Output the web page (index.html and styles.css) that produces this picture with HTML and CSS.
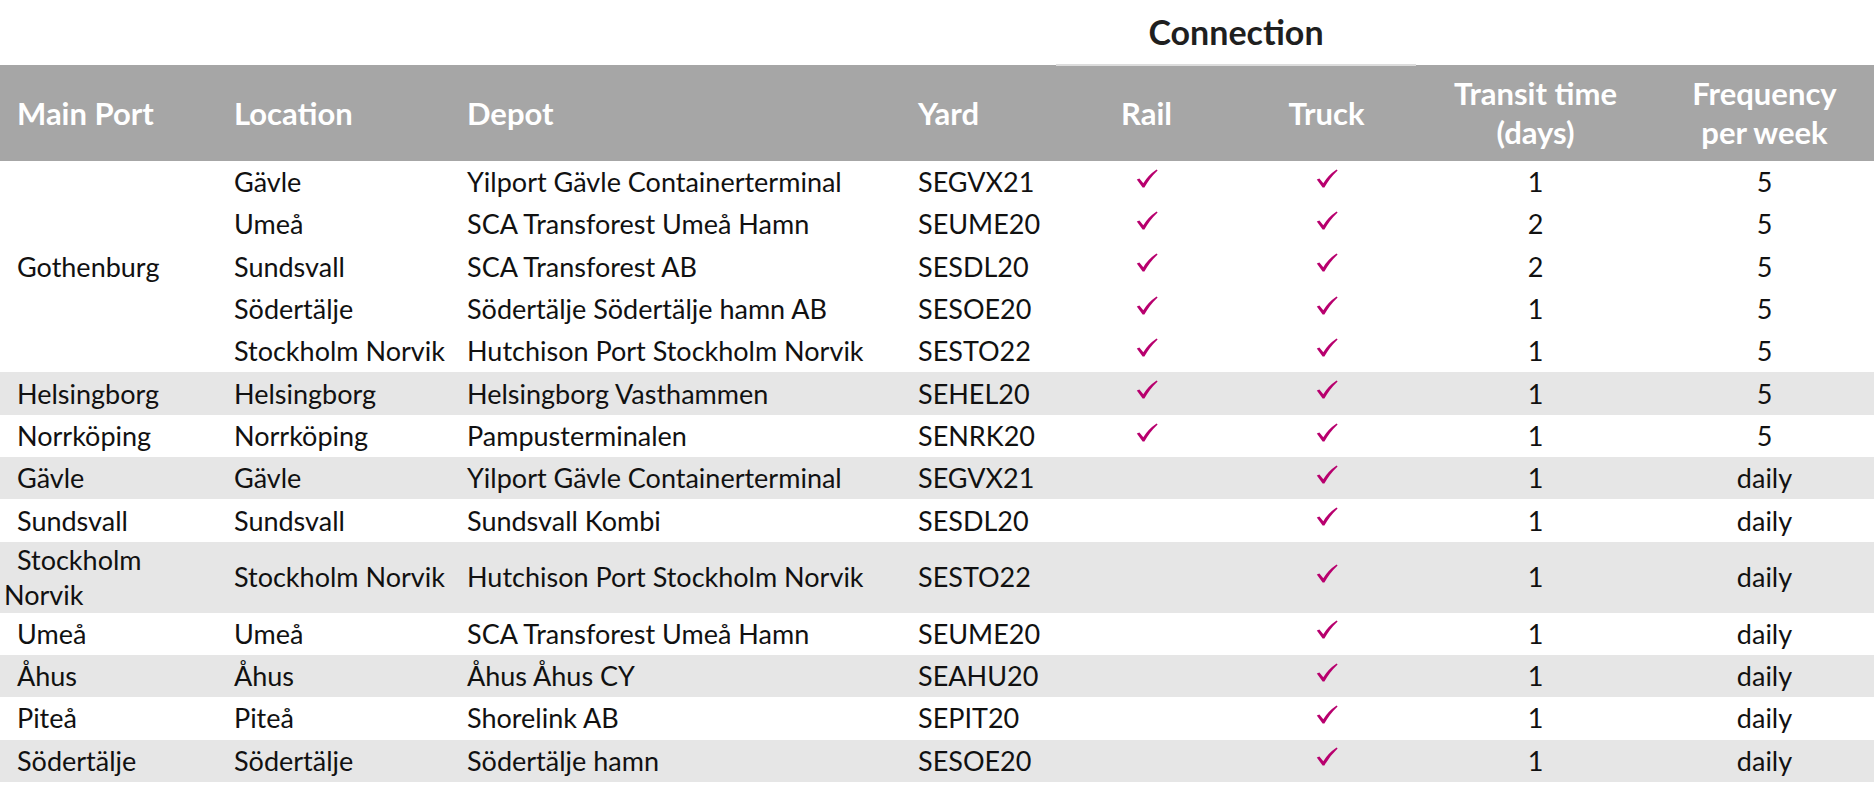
FILE: index.html
```html
<!DOCTYPE html>
<html lang="sv">
<head>
<meta charset="utf-8">
<title>Connections</title>
<link rel="stylesheet" href="styles.css">
</head>
<body>
<table class="grid">
  <colgroup>
    <col class="c-port"><col class="c-loc"><col class="c-depot"><col class="c-yard">
    <col class="c-rail"><col class="c-truck"><col class="c-transit"><col class="c-freq">
  </colgroup>
  <thead>
    <tr class="top">
      <th colspan="4"></th>
      <th colspan="2" class="connection">Connection</th>
      <th colspan="2"></th>
    </tr>
    <tr class="head">
      <th class="port">Main Port</th>
      <th class="txt">Location</th>
      <th class="txt">Depot</th>
      <th class="txt">Yard</th>
      <th class="mid">Rail</th>
      <th class="mid">Truck</th>
      <th class="mid">Transit time<br>(days)</th>
      <th class="mid">Frequency<br>per week</th>
    </tr>
  </thead>
  <tbody>
    <tr>
      <td class="port" rowspan="5">Gothenburg</td>
      <td class="txt">Gävle</td><td class="txt">Yilport Gävle Containerterminal</td><td class="txt">SEGVX21</td>
      <td class="mid"><svg class="chk" viewBox="0 0 22 19"><path d="M0.8 10.6 L3.4 9.4 L7.3 14.2 Q12 6.2 20.6 0.4 L21.6 1.4 Q13.4 9.2 8.4 18.6 L6.6 18.6 Z"/></svg></td>
      <td class="mid"><svg class="chk" viewBox="0 0 22 19"><path d="M0.8 10.6 L3.4 9.4 L7.3 14.2 Q12 6.2 20.6 0.4 L21.6 1.4 Q13.4 9.2 8.4 18.6 L6.6 18.6 Z"/></svg></td>
      <td class="mid">1</td><td class="mid">5</td>
    </tr>
    <tr>
      <td class="txt">Umeå</td><td class="txt">SCA Transforest Umeå Hamn</td><td class="txt">SEUME20</td>
      <td class="mid"><svg class="chk" viewBox="0 0 22 19"><path d="M0.8 10.6 L3.4 9.4 L7.3 14.2 Q12 6.2 20.6 0.4 L21.6 1.4 Q13.4 9.2 8.4 18.6 L6.6 18.6 Z"/></svg></td>
      <td class="mid"><svg class="chk" viewBox="0 0 22 19"><path d="M0.8 10.6 L3.4 9.4 L7.3 14.2 Q12 6.2 20.6 0.4 L21.6 1.4 Q13.4 9.2 8.4 18.6 L6.6 18.6 Z"/></svg></td>
      <td class="mid">2</td><td class="mid">5</td>
    </tr>
    <tr>
      <td class="txt">Sundsvall</td><td class="txt">SCA Transforest AB</td><td class="txt">SESDL20</td>
      <td class="mid"><svg class="chk" viewBox="0 0 22 19"><path d="M0.8 10.6 L3.4 9.4 L7.3 14.2 Q12 6.2 20.6 0.4 L21.6 1.4 Q13.4 9.2 8.4 18.6 L6.6 18.6 Z"/></svg></td>
      <td class="mid"><svg class="chk" viewBox="0 0 22 19"><path d="M0.8 10.6 L3.4 9.4 L7.3 14.2 Q12 6.2 20.6 0.4 L21.6 1.4 Q13.4 9.2 8.4 18.6 L6.6 18.6 Z"/></svg></td>
      <td class="mid">2</td><td class="mid">5</td>
    </tr>
    <tr>
      <td class="txt">Södertälje</td><td class="txt">Södertälje Södertälje hamn AB</td><td class="txt">SESOE20</td>
      <td class="mid"><svg class="chk" viewBox="0 0 22 19"><path d="M0.8 10.6 L3.4 9.4 L7.3 14.2 Q12 6.2 20.6 0.4 L21.6 1.4 Q13.4 9.2 8.4 18.6 L6.6 18.6 Z"/></svg></td>
      <td class="mid"><svg class="chk" viewBox="0 0 22 19"><path d="M0.8 10.6 L3.4 9.4 L7.3 14.2 Q12 6.2 20.6 0.4 L21.6 1.4 Q13.4 9.2 8.4 18.6 L6.6 18.6 Z"/></svg></td>
      <td class="mid">1</td><td class="mid">5</td>
    </tr>
    <tr>
      <td class="txt">Stockholm Norvik</td><td class="txt">Hutchison Port Stockholm Norvik</td><td class="txt">SESTO22</td>
      <td class="mid"><svg class="chk" viewBox="0 0 22 19"><path d="M0.8 10.6 L3.4 9.4 L7.3 14.2 Q12 6.2 20.6 0.4 L21.6 1.4 Q13.4 9.2 8.4 18.6 L6.6 18.6 Z"/></svg></td>
      <td class="mid"><svg class="chk" viewBox="0 0 22 19"><path d="M0.8 10.6 L3.4 9.4 L7.3 14.2 Q12 6.2 20.6 0.4 L21.6 1.4 Q13.4 9.2 8.4 18.6 L6.6 18.6 Z"/></svg></td>
      <td class="mid">1</td><td class="mid">5</td>
    </tr>
    <tr class="shade">
      <td class="port">Helsingborg</td>
      <td class="txt">Helsingborg</td><td class="txt">Helsingborg Vasthammen</td><td class="txt">SEHEL20</td>
      <td class="mid"><svg class="chk" viewBox="0 0 22 19"><path d="M0.8 10.6 L3.4 9.4 L7.3 14.2 Q12 6.2 20.6 0.4 L21.6 1.4 Q13.4 9.2 8.4 18.6 L6.6 18.6 Z"/></svg></td>
      <td class="mid"><svg class="chk" viewBox="0 0 22 19"><path d="M0.8 10.6 L3.4 9.4 L7.3 14.2 Q12 6.2 20.6 0.4 L21.6 1.4 Q13.4 9.2 8.4 18.6 L6.6 18.6 Z"/></svg></td>
      <td class="mid">1</td><td class="mid">5</td>
    </tr>
    <tr>
      <td class="port">Norrköping</td>
      <td class="txt">Norrköping</td><td class="txt">Pampusterminalen</td><td class="txt">SENRK20</td>
      <td class="mid"><svg class="chk" viewBox="0 0 22 19"><path d="M0.8 10.6 L3.4 9.4 L7.3 14.2 Q12 6.2 20.6 0.4 L21.6 1.4 Q13.4 9.2 8.4 18.6 L6.6 18.6 Z"/></svg></td>
      <td class="mid"><svg class="chk" viewBox="0 0 22 19"><path d="M0.8 10.6 L3.4 9.4 L7.3 14.2 Q12 6.2 20.6 0.4 L21.6 1.4 Q13.4 9.2 8.4 18.6 L6.6 18.6 Z"/></svg></td>
      <td class="mid">1</td><td class="mid">5</td>
    </tr>
    <tr class="shade">
      <td class="port">Gävle</td>
      <td class="txt">Gävle</td><td class="txt">Yilport Gävle Containerterminal</td><td class="txt">SEGVX21</td>
      <td class="mid"></td>
      <td class="mid"><svg class="chk" viewBox="0 0 22 19"><path d="M0.8 10.6 L3.4 9.4 L7.3 14.2 Q12 6.2 20.6 0.4 L21.6 1.4 Q13.4 9.2 8.4 18.6 L6.6 18.6 Z"/></svg></td>
      <td class="mid">1</td><td class="mid">daily</td>
    </tr>
    <tr>
      <td class="port">Sundsvall</td>
      <td class="txt">Sundsvall</td><td class="txt">Sundsvall Kombi</td><td class="txt">SESDL20</td>
      <td class="mid"></td>
      <td class="mid"><svg class="chk" viewBox="0 0 22 19"><path d="M0.8 10.6 L3.4 9.4 L7.3 14.2 Q12 6.2 20.6 0.4 L21.6 1.4 Q13.4 9.2 8.4 18.6 L6.6 18.6 Z"/></svg></td>
      <td class="mid">1</td><td class="mid">daily</td>
    </tr>
    <tr class="shade tall">
      <td class="port wrap">Stockholm Norvik</td>
      <td class="txt">Stockholm Norvik</td><td class="txt">Hutchison Port Stockholm Norvik</td><td class="txt">SESTO22</td>
      <td class="mid"></td>
      <td class="mid"><svg class="chk" viewBox="0 0 22 19"><path d="M0.8 10.6 L3.4 9.4 L7.3 14.2 Q12 6.2 20.6 0.4 L21.6 1.4 Q13.4 9.2 8.4 18.6 L6.6 18.6 Z"/></svg></td>
      <td class="mid">1</td><td class="mid">daily</td>
    </tr>
    <tr>
      <td class="port">Umeå</td>
      <td class="txt">Umeå</td><td class="txt">SCA Transforest Umeå Hamn</td><td class="txt">SEUME20</td>
      <td class="mid"></td>
      <td class="mid"><svg class="chk" viewBox="0 0 22 19"><path d="M0.8 10.6 L3.4 9.4 L7.3 14.2 Q12 6.2 20.6 0.4 L21.6 1.4 Q13.4 9.2 8.4 18.6 L6.6 18.6 Z"/></svg></td>
      <td class="mid">1</td><td class="mid">daily</td>
    </tr>
    <tr class="shade">
      <td class="port">Åhus</td>
      <td class="txt">Åhus</td><td class="txt">Åhus Åhus CY</td><td class="txt">SEAHU20</td>
      <td class="mid"></td>
      <td class="mid"><svg class="chk" viewBox="0 0 22 19"><path d="M0.8 10.6 L3.4 9.4 L7.3 14.2 Q12 6.2 20.6 0.4 L21.6 1.4 Q13.4 9.2 8.4 18.6 L6.6 18.6 Z"/></svg></td>
      <td class="mid">1</td><td class="mid">daily</td>
    </tr>
    <tr>
      <td class="port">Piteå</td>
      <td class="txt">Piteå</td><td class="txt">Shorelink AB</td><td class="txt">SEPIT20</td>
      <td class="mid"></td>
      <td class="mid"><svg class="chk" viewBox="0 0 22 19"><path d="M0.8 10.6 L3.4 9.4 L7.3 14.2 Q12 6.2 20.6 0.4 L21.6 1.4 Q13.4 9.2 8.4 18.6 L6.6 18.6 Z"/></svg></td>
      <td class="mid">1</td><td class="mid">daily</td>
    </tr>
    <tr class="shade">
      <td class="port">Södertälje</td>
      <td class="txt">Södertälje</td><td class="txt">Södertälje hamn</td><td class="txt">SESOE20</td>
      <td class="mid"></td>
      <td class="mid"><svg class="chk" viewBox="0 0 22 19"><path d="M0.8 10.6 L3.4 9.4 L7.3 14.2 Q12 6.2 20.6 0.4 L21.6 1.4 Q13.4 9.2 8.4 18.6 L6.6 18.6 Z"/></svg></td>
      <td class="mid">1</td><td class="mid">daily</td>
    </tr>
  </tbody>
</table>
</body>
</html>
```

FILE: styles.css
```css
html, body {
  margin: 0;
  padding: 0;
  background: #ffffff;
}

body {
  font-family: Lato, "Liberation Sans", sans-serif;
  color: #111111;
}

.grid {
  width: 1874px;
  border-collapse: collapse;
  border-spacing: 0;
  table-layout: fixed;
}

.c-port { width: 222px; }
.c-loc { width: 233px; }
.c-depot { width: 451px; }
.c-yard { width: 150px; }
.c-rail { width: 181px; }
.c-truck { width: 179px; }
.c-transit { width: 239px; }
.c-freq { width: 219px; }

th, td {
  padding: 0;
  white-space: nowrap;
}

.top th {
  height: 64px;
  line-height: 40px;
  vertical-align: middle;
}

.connection {
  font-size: 34px;
  font-weight: 700;
  color: #1f1f1f;
  text-align: center;
  border-bottom: 2px solid #dcdcdc;
}

.head th {
  height: 95px;
  background: #a6a6a6;
  color: #ffffff;
  font-size: 31px;
  font-weight: 700;
  line-height: 39px;
  vertical-align: middle;
  text-align: left;
}

.head th.port { padding-left: 17px; }
.head th.txt { padding-left: 12px; }
.head th.mid { text-align: center; }

tbody td {
  height: 42.3px;
  font-size: 27px;
  line-height: 32px;
  vertical-align: middle;
}

tbody tr.shade td { background: #e6e6e6; }

tbody td.port {
  padding-left: 4px;
  text-indent: 13px;
  text-align: left;
}

tbody td.txt {
  padding-left: 12px;
  text-align: left;
}

tbody td.mid {
  text-align: center;
}

tbody tr.tall td {
  height: 71px;
}

tbody td.wrap {
  white-space: normal;
  line-height: 35px;
  padding-right: 60px;
}

.chk {
  width: 22px;
  height: 19px;
  fill: #b8006e;
  display: inline-block;
  vertical-align: middle;
  position: relative;
  top: -7px;
}
```
